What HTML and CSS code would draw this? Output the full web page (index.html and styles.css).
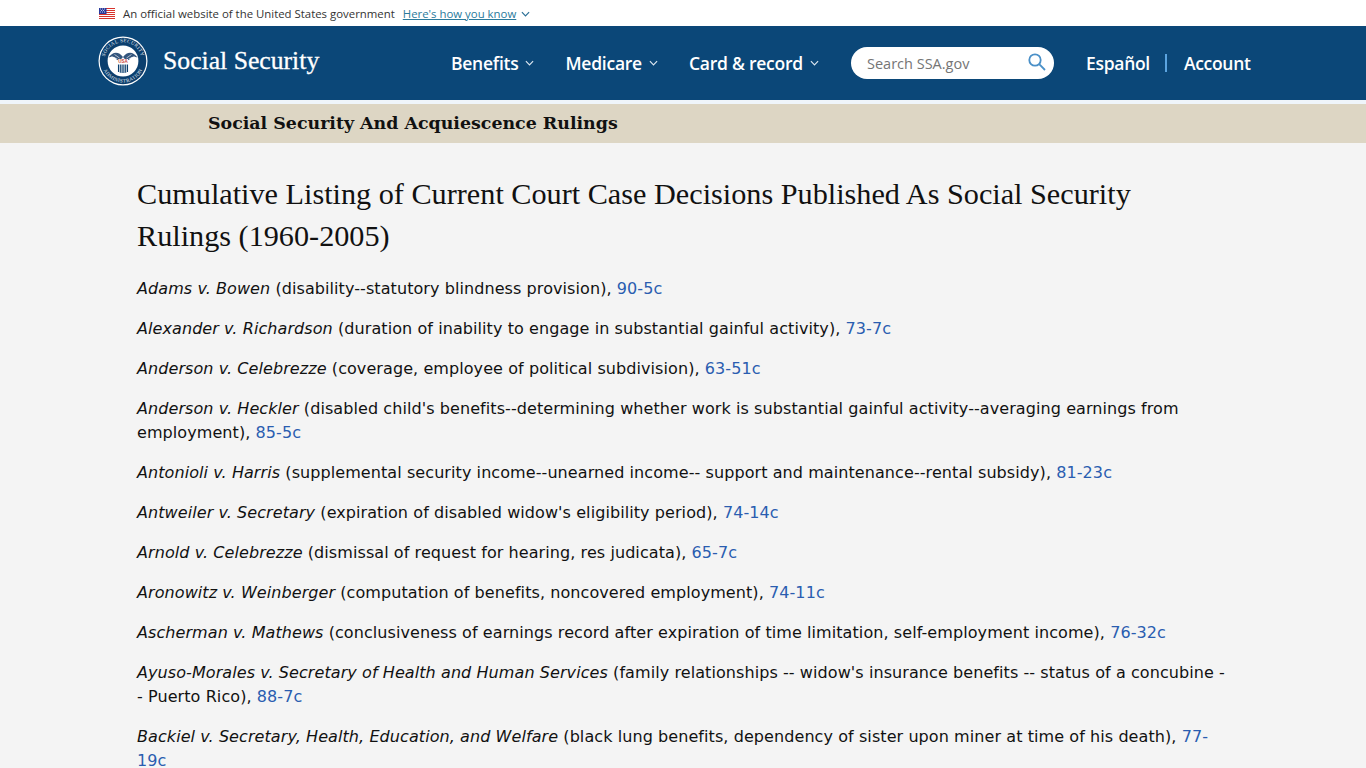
FILE: index.html
```html
<!DOCTYPE html>
<html lang="en">

<head>
	<meta charset="utf-8" />
	<title>Social Security And Acquiescence Rulings</title>
	<meta name="viewport" content="width=device-width, initial-scale=1" />
	<link rel="stylesheet" href="styles.css">
</head>

<body>
	<div class="gov-banner">
		<svg class="flag" viewBox="0 0 16 11" width="16" height="11" aria-hidden="true">
			<rect width="16" height="11" fill="#fff" />
			<path d="M0 .5h16M0 2.500h16M0 4.500h16M0 6.500h16M0 8.500h16M0 10.500h16" stroke="#d8332c" stroke-width="1" />
			<rect width="7.500" height="6" fill="#2a3a9c" />
			<path d="M1 1h1M3 1h1M5 1h1M2 2.500h1M4 2.500h1M1 4h1M3 4h1M5 4h1" stroke="#e8ebf8" stroke-width=".8" />
		</svg>
		<span class="gov-text">An official website of the United States government</span>
		<a class="gov-link" href="#">Here's how you know</a>
		<svg class="chev gov-chev" viewBox="0 0 10 6" width="9" height="6" aria-hidden="true"><path d="M1 1l4 4 4-4" /></svg>
	</div>

	<header class="site-head">
		<a class="brand" href="#">
			<svg class="seal" viewBox="0 0 50 50" width="50" height="50" aria-label="Social Security Administration seal">
				<defs>
					<path id="seal-top" d="M6.200 25a18.800 18.800 0 0 1 37.600 0" />
					<path id="seal-bottom" d="M3.600 25a21.400 21.400 0 0 0 42.800 0" />
				</defs>
				<circle cx="25" cy="25" r="24.500" fill="#fff" />
				<circle cx="25" cy="25" r="23.300" fill="#0b3f6e" />
				<circle cx="25" cy="25" r="15.400" fill="#fff" />
				<text class="seal-text"><textPath href="#seal-top" startOffset="50%" text-anchor="middle">SOCIAL SECURITY</textPath></text>
				<text class="seal-text"><textPath href="#seal-bottom" startOffset="50%" text-anchor="middle">ADMINISTRATION</textPath></text>
				<path d="M25 21C21 15.500 15 15 10.500 21.500c4-1.500 6.500-.5 8.500 2.500 2.500.5 4.500-.5 6-3zM25 21c4-5.500 10-6 14.500.5-4-1.500-6.500-.5-8.500 2.500-2.500.5-4.500-.5-6-3z" fill="#33557d" />
				<path d="M13.500 20.500l6 2.500M16.500 18.500l5 3.500M36.500 20.500l-6 2.500M33.500 18.500l-5 3.500" stroke="#fff" stroke-width=".6" />
				<rect x="20" y="23" width="10" height="4.500" fill="#fff" />
				<text class="seal-usa" x="25" y="27.300" text-anchor="middle">USA</text>
				<path d="M20.500 28.500v7.500M22.300 28.500v8.300M24.100 28.500v8.500M25.900 28.500v8.500M27.700 28.500v8.300M29.500 28.500v7.500" stroke="#0b3f6e" stroke-width="1.100" />
			</svg>
			<span class="brand-name">Social Security</span>
		</a>
		<nav class="main-nav">
			<a class="nav-item" href="#">Benefits<svg class="chev" viewBox="0 0 10 6" width="9" height="6" aria-hidden="true"><path d="M1 1l4 4 4-4" /></svg></a>
			<a class="nav-item" href="#">Medicare<svg class="chev" viewBox="0 0 10 6" width="9" height="6" aria-hidden="true"><path d="M1 1l4 4 4-4" /></svg></a>
			<a class="nav-item" href="#">Card &amp; record<svg class="chev" viewBox="0 0 10 6" width="9" height="6" aria-hidden="true"><path d="M1 1l4 4 4-4" /></svg></a>
		</nav>
		<div class="search">
			<span class="search-hint">Search SSA.gov</span>
			<svg class="search-icon" viewBox="0 0 18 18" width="18" height="18" aria-hidden="true">
				<circle cx="7" cy="7" r="5.700" />
				<path d="M11.200 11.200l5.800 5.800" />
			</svg>
		</div>
		<div class="util-nav">
			<a class="util-link" href="#">Español</a>
			<span class="util-sep"></span>
			<a class="util-link" href="#">Account</a>
		</div>
	</header>

	<div class="head-gap"></div>

	<div class="section-band">
		<p class="section-title">Social Security And Acquiescence Rulings</p>
	</div>

	<main class="content">
		<h1>Cumulative Listing of Current Court Case Decisions Published As Social Security Rulings (1960-2005)</h1>
		<p><em>Adams v. Bowen</em> (disability--statutory blindness provision), <a href="#">90-5c</a></p>
		<p><em>Alexander v. Richardson</em> (duration of inability to engage in substantial gainful activity), <a href="#">73-7c</a></p>
		<p><em>Anderson v. Celebrezze</em> (coverage, employee of political subdivision), <a href="#">63-51c</a></p>
		<p><em>Anderson v. Heckler</em> (disabled child's benefits--determining whether work is substantial gainful activity--averaging earnings from employment), <a href="#">85-5c</a></p>
		<p><em>Antonioli v. Harris</em> (supplemental security income--unearned income-- support and maintenance--rental subsidy), <a href="#">81-23c</a></p>
		<p><em>Antweiler v. Secretary</em> (expiration of disabled widow's eligibility period), <a href="#">74-14c</a></p>
		<p><em>Arnold v. Celebrezze</em> (dismissal of request for hearing, res judicata), <a href="#">65-7c</a></p>
		<p><em>Aronowitz v. Weinberger</em> (computation of benefits, noncovered employment), <a href="#">74-11c</a></p>
		<p><em>Ascherman v. Mathews</em> (conclusiveness of earnings record after expiration of time limitation, self-employment income), <a href="#">76-32c</a></p>
		<p><em>Ayuso-Morales v. Secretary of Health and Human Services</em> (family relationships -- widow's insurance benefits -- status of a concubine -- Puerto Rico), <a href="#">88-7c</a></p>
		<p><em>Backiel v. Secretary, Health, Education, and Welfare</em> (black lung benefits, dependency of sister upon miner at time of his death), <a href="#">77-19c</a></p>
	</main>
</body>

</html>
```

FILE: styles.css
```css
* {
	box-sizing: border-box;
}

html, body {
	height: 768px;
	overflow: hidden;
}

body {
	margin: 0;
	background-color: #f4f4f4;
	color: #111111;
	font-family: "DejaVu Sans", Verdana, sans-serif;
}

/* top strip */
.gov-banner {
	display: flex;
	align-items: center;
	height: 26px;
	padding: 1px 0 0 99px;
	background-color: #ffffff;
	font-family: "Open Sans", sans-serif;
	font-size: 11.400px;
	color: #333333;
}

.gov-text {
	margin-left: 8px;
}

.gov-link {
	margin-left: 8px;
	color: #2a7a9b;
}

.chev {
	fill: none;
	stroke: #dbe6f0;
	stroke-width: 1.3;
	margin-left: 7px;
}

.gov-chev {
	stroke: #2a6f96;
	margin-left: 5px;
}

/* main header */
.site-head {
	display: flex;
	align-items: center;
	height: 74px;
	padding-left: 98px;
	background-color: #0b4778;
	color: #ffffff;
	font-family: "Open Sans", sans-serif;
}

.brand {
	display: flex;
	align-items: center;
	width: 353px;
	margin-top: -4px;
	color: #ffffff;
	text-decoration: none;
}

.brand-name {
	margin-left: 15px;
	font-family: "Liberation Serif", serif;
	font-size: 25.700px;
	-webkit-text-stroke: .3px #ffffff;
}

.seal-text {
	font-family: "Liberation Serif", serif;
	font-size: 5px;
	letter-spacing: .4px;
	fill: #e6edf4;
}

.seal-usa {
	font-family: "Liberation Sans", sans-serif;
	font-size: 4.500px;
	font-weight: bold;
	fill: #c8443c;
}

.main-nav {
	display: flex;
	gap: 31px;
	width: 400px;
}

.nav-item {
	display: flex;
	align-items: center;
	color: #ffffff;
	font-size: 17.500px;
	letter-spacing: -.25px;
	font-weight: 600;
	text-decoration: none;
}

.search {
	display: flex;
	align-items: center;
	justify-content: space-between;
	width: 203px;
	height: 32px;
	padding: 0 8px 0 16px;
	border-radius: 16px;
	background-color: #ffffff;
	font-size: 14.500px;
	color: #757575;
}

.search-icon {
	fill: none;
	stroke: #4a90c8;
	stroke-width: 1.800;
	margin-top: -2px;
}

.util-nav {
	display: flex;
	align-items: center;
	margin-left: 32px;
}

.util-link {
	color: #ffffff;
	font-size: 17.500px;
	letter-spacing: -.3px;
	font-weight: 600;
	text-decoration: none;
}

.util-sep {
	width: 2px;
	height: 18px;
	margin: 0 17px 0 15px;
	background-color: #5ba4e0;
}

.head-gap {
	height: 4px;
	background-color: #eff5fa;
}

/* tan band */
.section-band {
	height: 39px;
	padding-left: 208px;
	background-color: #ddd6c4;
}

.section-title {
	margin: 0;
	font-family: "DejaVu Serif", serif;
	font-size: 17.400px;
	font-weight: bold;
	line-height: 39px;
	color: #111111;
}

/* listing */
.content {
	width: 1088px;
	margin-left: 137px;
	padding-top: 30px;
}

.content h1 {
	margin: 0 0 20px 0;
	font-family: "Liberation Serif", serif;
	font-size: 30.220px;
	font-weight: normal;
	line-height: 42px;
	color: #111111;
}

.content p {
	margin: 0 0 16px 0;
	font-size: 16px;
	letter-spacing: .08px;
	line-height: 24px;
}

.content a {
	color: #2a5db0;
	text-decoration: none;
}
```
